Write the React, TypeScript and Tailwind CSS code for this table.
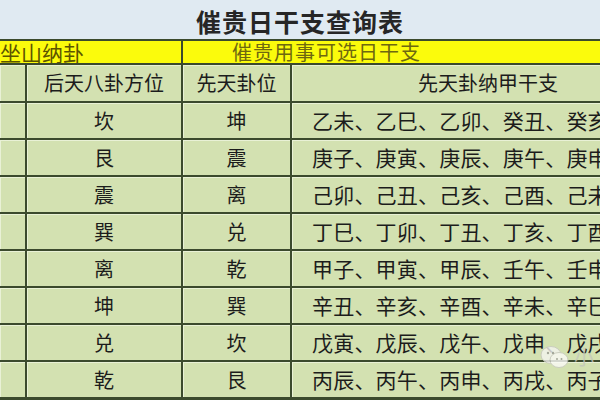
const rows: [string, string, string][] = [
  ["坎", "坤", "乙未、乙巳、乙卯、癸丑、癸亥"],
  ["艮", "震", "庚子、庚寅、庚辰、庚午、庚申"],
  ["震", "离", "己卯、己丑、己亥、己酉、己未"],
  ["巽", "兑", "丁巳、丁卯、丁丑、丁亥、丁酉"],
  ["离", "乾", "甲子、甲寅、甲辰、壬午、壬申"],
  ["坤", "巽", "辛丑、辛亥、辛酉、辛未、辛巳"],
  ["兑", "坎", "戊寅、戊辰、戊午、戊申、戊戌"],
  ["乾", "艮", "丙辰、丙午、丙申、丙戌、丙子"],
];

const cell =
  "bg-[#d3e1b1] shadow-[inset_1px_1px_0_#e9f1d6] flex items-center overflow-hidden whitespace-nowrap";

const Watermark = () => (
  <div className="absolute left-[540px] top-[344px] flex items-center gap-1 opacity-80">
    <svg width="30" height="26" viewBox="0 0 30 26">
      <ellipse cx="11" cy="11" rx="10" ry="8.5" fill="#f4f4f0" stroke="#c9c9c2" strokeWidth="1" />
      <ellipse cx="19" cy="16" rx="9" ry="7.5" fill="#fbfbf8" stroke="#c9c9c2" strokeWidth="1" />
      <circle cx="8" cy="9" r="1.2" fill="#9a9a94" />
      <circle cx="13" cy="9" r="1.2" fill="#9a9a94" />
      <circle cx="17" cy="15" r="1" fill="#9a9a94" />
      <circle cx="21.5" cy="15" r="1" fill="#9a9a94" />
    </svg>
    <span className="text-[20px] leading-none text-[#c4c8bc]">小</span>
  </div>
);

export default function App() {
  return (
    <div
      className="relative w-[600px] h-[400px] overflow-hidden bg-[#3b4a2d] text-[#1c1c1c]"
      style={{ fontFamily: '"Noto Sans CJK SC", "Noto Sans", sans-serif' }}
    >
      <div className="h-[39px] bg-[#e0eaf2] flex items-center justify-center">
        <span className="text-[25px] font-bold leading-none tracking-[1px] text-[#262626] pt-[4px]">
          催贵日干支查询表
        </span>
      </div>
      <div className="grid grid-cols-[25px_154px_107px_308px] grid-rows-[22px_36px_repeat(8,35px)] gap-[2px] pt-[2px]">
        <div className="col-span-2 bg-[#fbfb0c] flex items-center overflow-hidden whitespace-nowrap">
          <span className="text-[21px] leading-[22px] text-[#5c5400]">坐山纳卦</span>
        </div>
        <div className="col-span-2 bg-[#fbfb0c] flex items-center overflow-hidden whitespace-nowrap">
          <span className="text-[20px] leading-[22px] text-[#6e6810] pl-[49px] tracking-[1px]">
            催贵用事可选日干支
          </span>
        </div>

        <div className={`${cell} bg-[#cbd9a8]`} />
        <div className={`${cell} bg-[#cbd9a8] justify-center text-[20px]`}>后天八卦方位</div>
        <div className={`${cell} bg-[#cbd9a8] justify-center text-[20px]`}>先天卦位</div>
        <div className={`${cell} bg-[#cbd9a8] pl-[126px] text-[20px]`}>先天卦纳甲干支</div>

        {rows.map(([a, b, c], i) => (
          <div key={i} className="contents">
            <div className={cell} />
            <div className={`${cell} justify-center text-[20px]`}>{a}</div>
            <div className={`${cell} justify-center text-[20px]`}>{b}</div>
            <div className={`${cell} pl-[20px] text-[21px] tracking-[0.2px]`}>{c}</div>
          </div>
        ))}
      </div>
      <Watermark />
    </div>
  );
}
